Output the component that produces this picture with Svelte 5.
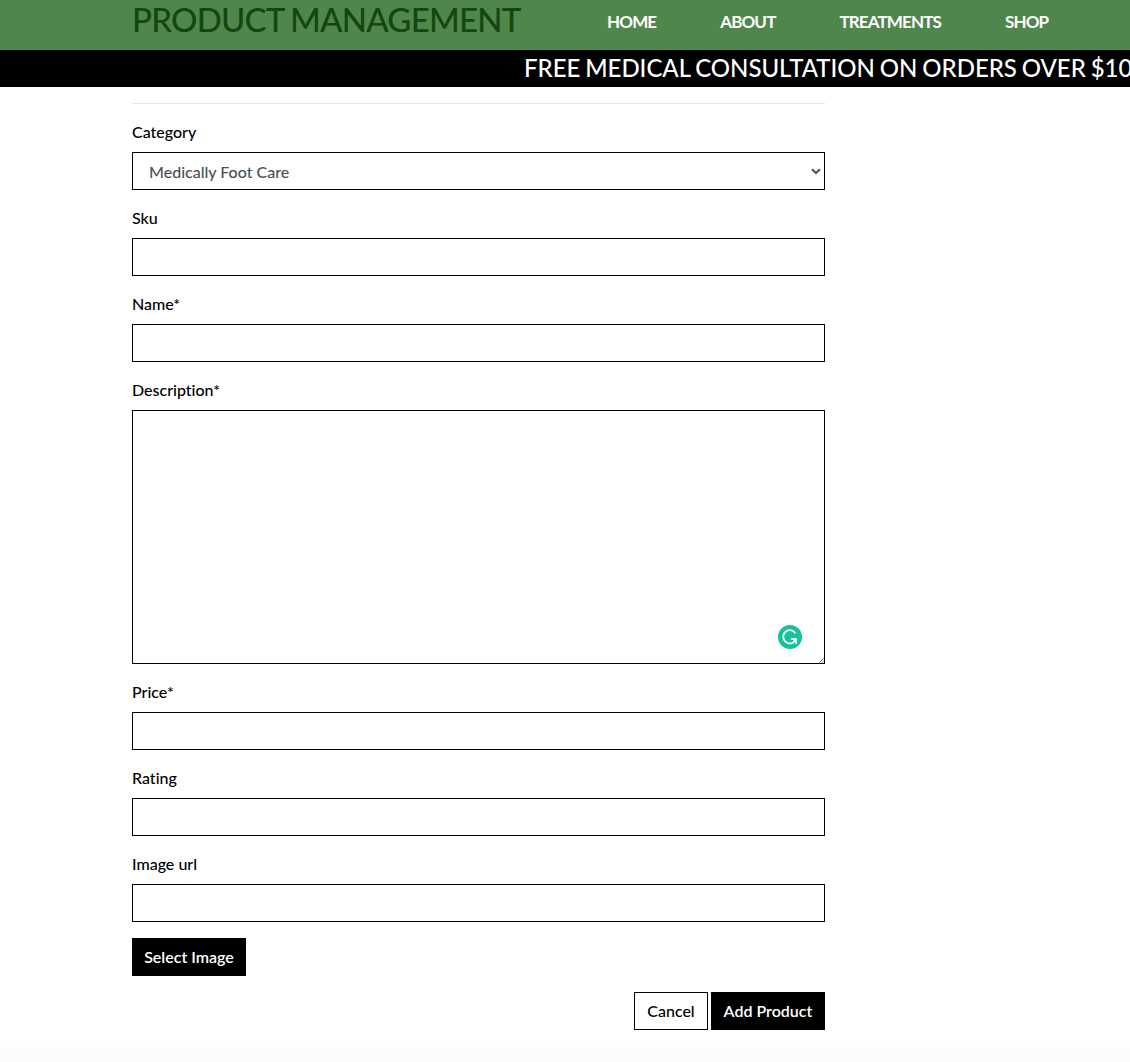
<script>
  const links = ['Home', 'About', 'Treatments', 'Shop'];
  const before = [
    { id: 'sku', label: 'Sku' },
    { id: 'name', label: 'Name*' }
  ];
  const after = [
    { id: 'price', label: 'Price*' },
    { id: 'rating', label: 'Rating' },
    { id: 'image-url', label: 'Image url' }
  ];
</script>

<header>
  <h1>PRODUCT MANAGEMENT</h1>
  <nav>
    {#each links as link}
      <a href="#{link.toLowerCase()}">{link.toUpperCase()}</a>
    {/each}
  </nav>
</header>
<div class="banner"><span>FREE MEDICAL CONSULTATION ON ORDERS OVER $100</span></div>

<main>
  <hr />
  <form>
    <div class="group">
      <label for="category">Category</label>
      <div class="select-wrap">
        <select id="category"><option>Medically Foot Care</option></select>
        <svg class="chevron" width="10" height="7" viewBox="0 0 10 7"><path d="M1 1.2 5 5 9 1.2" /></svg>
      </div>
    </div>
    {#each before as field}
      <div class="group">
        <label for={field.id}>{field.label}</label>
        <input id={field.id} type="text" />
      </div>
    {/each}
    <div class="group">
      <label for="description">Description*</label>
      <div class="area-wrap">
        <textarea id="description"></textarea>
        <svg class="assistant" width="24" height="24" viewBox="0 0 24 24">
          <circle cx="12" cy="12" r="12" />
          <path d="M17.4 8.2A6.6 6.6 0 1 0 15.4 17.4M12.8 14.2H18.1V18.8M17.8 14.4 15.4 17.4" />
        </svg>
        <svg class="grip" width="5" height="5" viewBox="0 0 5 5"><path d="M0.5 4.5 4.5 0.5M3.2 4.5 4.5 3.2" /></svg>
      </div>
    </div>
    {#each after as field}
      <div class="group">
        <label for={field.id}>{field.label}</label>
        <input id={field.id} type="text" />
      </div>
    {/each}
    <button class="dark select-image" type="button">Select Image</button>
    <div class="actions">
      <button class="light" type="button">Cancel</button>
      <button class="dark add" type="button">Add Product</button>
    </div>
  </form>
</main>

<style>
  :global(html) { overflow: hidden; }
  :global(body) { background: #fff; }
  :global(#app) {
    box-sizing: border-box;
    height: 1062px;
    overflow: hidden;
    color: #000;
    font: 500 16px/24px Lato, sans-serif;
    font-variant-ligatures: none;
    background: linear-gradient(#fff, #fbfbfb) bottom / 100% 22px no-repeat;
  }
  header {
    display: flex;
    height: 50px;
    padding-left: 132px;
    box-sizing: border-box;
    background: #4f864c;
  }
  h1 {
    margin: 0;
    width: 475px;
    color: #13470f;
    font-size: 33px;
    font-weight: 500;
    line-height: 39px;
    letter-spacing: -0.78px;
    word-spacing: -1px;
    white-space: nowrap;
  }
  nav { display: flex; gap: 63.9px; }
  a {
    color: #fff;
    font-size: 17px;
    font-weight: 700;
    line-height: 44px;
    letter-spacing: -0.85px;
    text-decoration: none;
  }
  .banner {
    height: 37px;
    padding-left: 524px;
    overflow: hidden;
    background: #000;
    color: #fff;
    font-size: 24px;
    line-height: 35px;
    letter-spacing: -0.03px;
    word-spacing: -1.1px;
    white-space: nowrap;
  }
  main { width: 693px; margin-left: 132px; }
  hr { margin: 16px 0; border: 0; border-top: 1px solid #e5e5e5; }
  .group { margin-bottom: 16px; }
  label { display: block; margin-bottom: 8px; }
  input, select, textarea {
    display: block;
    box-sizing: border-box;
    width: 100%;
    height: 38px;
    margin: 0;
    border: 1px solid #000;
    border-radius: 0;
    background: #fff;
    color: #495057;
    font: inherit;
  }
  select { padding: 2px 16px 0; appearance: none; }
  textarea { height: 254px; resize: none; }
  .select-wrap, .area-wrap { position: relative; }
  .chevron { position: absolute; right: 4px; top: 16px; fill: none; stroke: #495057; stroke-width: 2; }
  .assistant { position: absolute; right: 23px; top: 215px; }
  .assistant circle { fill: #15c39a; }
  .assistant path { fill: none; stroke: #fff; stroke-width: 1.8; }
  .grip { position: absolute; right: 1px; bottom: 1px; fill: none; stroke: #555; stroke-width: 0.9; }
  button {
    box-sizing: border-box;
    height: 38px;
    padding: 0;
    border: 1px solid #000;
    border-radius: 0;
    font: inherit;
  }
  .dark { width: 114px; background: #000; color: #fff; font-weight: 600; }
  .light { width: 74px; background: #fff; color: #000; }
  .select-image { display: block; }
  .actions { display: flex; justify-content: flex-end; gap: 3px; margin-top: 16px; }
</style>
